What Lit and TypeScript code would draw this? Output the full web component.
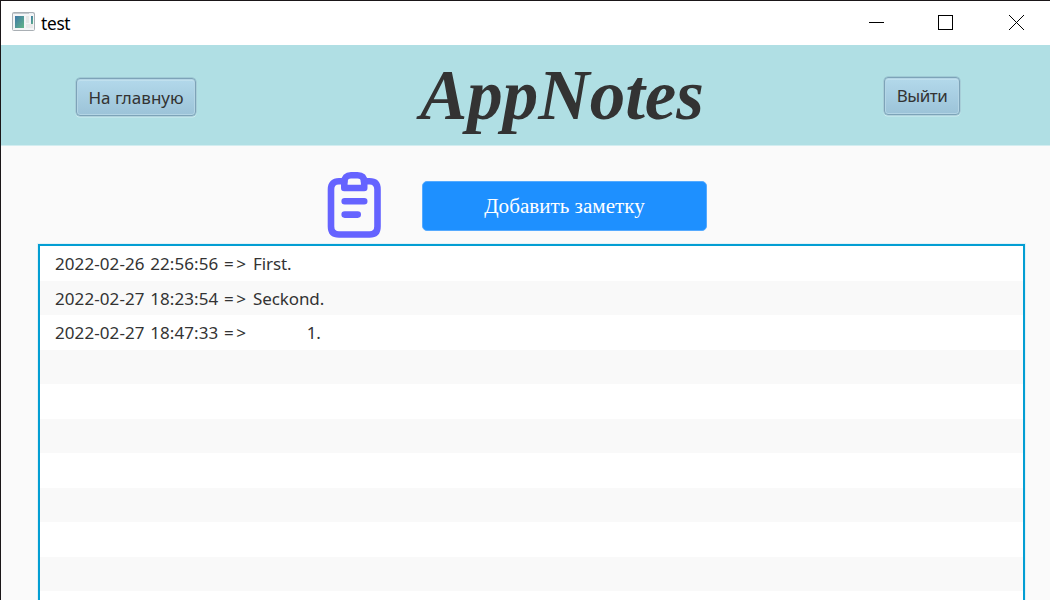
import { LitElement, html, css, svg } from "lit";
import { customElement, property } from "lit/decorators.js";

interface Note {
  stamp: string;
  text: string;
}

@customElement("title-bar")
class TitleBar extends LitElement {
  @property() label = "";
  static styles = css`
    :host { display: flex; align-items: center; height: 44px; background: #fff; color: #000; }
    .icon { margin: -3px 6px 0 11px; display: block; }
    .label { font: 17.3px/24px "Noto Sans", "Open Sans", sans-serif; flex: 1; padding-top: 2px; letter-spacing: -0.3px; }
    .controls { display: block; }
  `;
  render() {
    return html`
      <svg class="icon" width="23" height="19" viewBox="0 0 23 19">
        <defs>
          <linearGradient id="g" x1="0" y1="0" x2="1" y2="1">
            <stop offset="0" stop-color="#3f78a8" /><stop offset="1" stop-color="#62b586" />
          </linearGradient>
        </defs>
        <rect x=".5" y=".5" width="22" height="18" rx="1" fill="#f4f5f6" stroke="#a9afb4" />
        <path d="M1 1.5H22" stroke="#c3c9ce" />
        <path d="M17 1.5H21" stroke="#e8edf2" />
        <rect x="3" y="4" width="9" height="12" fill="url(#g)" />
        <rect x="14" y="4" width="3" height="7" fill="#e6e7e6" />
        <rect x="14" y="12" width="7" height="4" fill="#e9e9e9" />
        <rect x="19" y="4" width="2" height="8" fill="url(#g)" />
      </svg>
      <span class="label">${this.label}</span>
      <svg class="controls" width="181" height="44" viewBox="0 0 181 44" fill="none" stroke="#000">
        <path d="M0 21.5H15" shape-rendering="crispEdges" />
        <rect x="69.5" y="14.5" width="14" height="14" shape-rendering="crispEdges" />
        <path d="M140 14L155 29M155 14L140 29" />
      </svg>
    `;
  }
}

@customElement("glass-button")
class GlassButton extends LitElement {
  static styles = css`
    :host { display: block; }
    .face {
      box-sizing: border-box; width: 100%; height: 38px; padding: var(--drop, 0) 0 0; display: block;
      border: 1px solid #7da3b8; border-radius: 4px;
      background: linear-gradient(#b3d9eb, #9cc3d8);
      box-shadow: inset 0 0 0 1px #b4d5e5, inset 0 1px 0 1px #c0e0ee, 0 0 0 0.5px #8fb6c6, 0 1px 0 0.5px #d0eef2;
      color: #333; text-align: center; white-space: nowrap;
      font: 17px/36px "Noto Sans", "Open Sans", sans-serif;
      letter-spacing: var(--tracking, 0);
    }
  `;
  render() {
    return html`<button class="face"><slot></slot></button>`;
  }
}

@customElement("note-list")
class NoteList extends LitElement {
  @property({ attribute: false }) notes: Note[] = [];
  static styles = css`
    :host {
      display: block; box-sizing: border-box; border: 2px solid #039ed3; border-bottom: 0;
      background: #fff; box-shadow: 0 0 0 1px #e3f2f7; overflow: hidden;
    }
    .row {
      display: flex; height: 34px; padding-left: 15px; white-space: pre; color: #333;
      font: 17px/36px "Noto Sans", "Open Sans", sans-serif;
    }
    .row:nth-child(odd) { height: 35px; }
    .row:nth-child(even) { background: #f9f9f9; }
    .stamp { width: 169px; letter-spacing: 0.08px; word-spacing: 1.2px; }
    .arrow { width: 29px; letter-spacing: 2.5px; }
    .text { letter-spacing: -0.1px; word-spacing: 0.15px; }
  `;
  render() {
    const rows = Array.from({ length: 11 }, (_, i) => this.notes[i]);
    return rows.map((n) => html`<div class="row">${n
      ? html`<span class="stamp">${n.stamp}</span><span class="arrow">=&gt;</span><span class="text">${n.text}</span>`
      : ""}</div>`);
  }
}

@customElement("app-root")
class AppRoot extends LitElement {
  static styles = css`
    :host {
      display: flex; flex-direction: column; box-sizing: border-box; width: 1050px; height: 600px;
      overflow: hidden; background: #fafafa; border-top: 1px solid #1a1618; border-left: 1px solid #1a1618;
    }
    .banner {
      box-sizing: border-box; height: 101px; background: #b0dfe4; border-bottom: 1px solid #d3edf0;
      display: grid; grid-template-columns: 75px 120px 688px 76px; align-items: start; flex: none;
    }
    .home { grid-column: 2; margin-top: 33px; --drop: 1px; }
    .title {
      margin: 9px 0 0 224px; font: italic bold 71px/82px "Liberation Serif", serif; color: #333;
      white-space: nowrap;
    }
    .exit { margin-top: 32px; --tracking: -0.5px; }
    .actions { display: flex; height: 97px; padding-left: 326px; box-sizing: border-box; flex: none; }
    .clip { display: block; margin: 25px 41px 0 0; }
    .add {
      width: 285px; height: 50px; margin-top: 35px; border: 1px solid #55aaff; border-radius: 5px;
      padding: 0; background: #1e90ff; color: #fff; font: 21.1px/48px "Liberation Serif", serif;
      white-space: nowrap;
    }
    .notes { flex: 1; margin: 1px 25px 0 37px; }
  `;
  private notes: Note[] = [
    { stamp: "2022-02-26 22:56:56", text: "First." },
    { stamp: "2022-02-27 18:23:54", text: "Seckond." },
    { stamp: "2022-02-27 18:47:33", text: "            1." },
  ];
  render() {
    return html`
      <title-bar label="test"></title-bar>
      <header class="banner">
        <glass-button class="home">На главную</glass-button>
        <h1 class="title">AppNotes</h1>
        <glass-button class="exit">Выйти</glass-button>
      </header>
      <div class="actions">
        ${svg`<svg class="clip" width="54" height="68" viewBox="0 0 54 68" fill="none" stroke="#6563ff"
          stroke-width="6.6" stroke-linecap="round" stroke-linejoin="round">
          <path d="M17.3 10.3H12Q4 10.3 4 18.3V55.5Q4 63.5 12 63.5H42.5Q50.5 63.5 50.5 55.5V18.3Q50.5 10.3 42.5 10.3H37" />
          <path d="M17.3 17V11Q17.3 4.3 24 4.3H30.5Q37.2 4.3 37.2 11V17Z" />
          <path d="M17.7 30.3H37.2M17.7 43.6H30.7" />
        </svg>`}
        <button class="add">Добавить заметку</button>
      </div>
      <note-list class="notes" .notes=${this.notes}></note-list>
    `;
  }
}
